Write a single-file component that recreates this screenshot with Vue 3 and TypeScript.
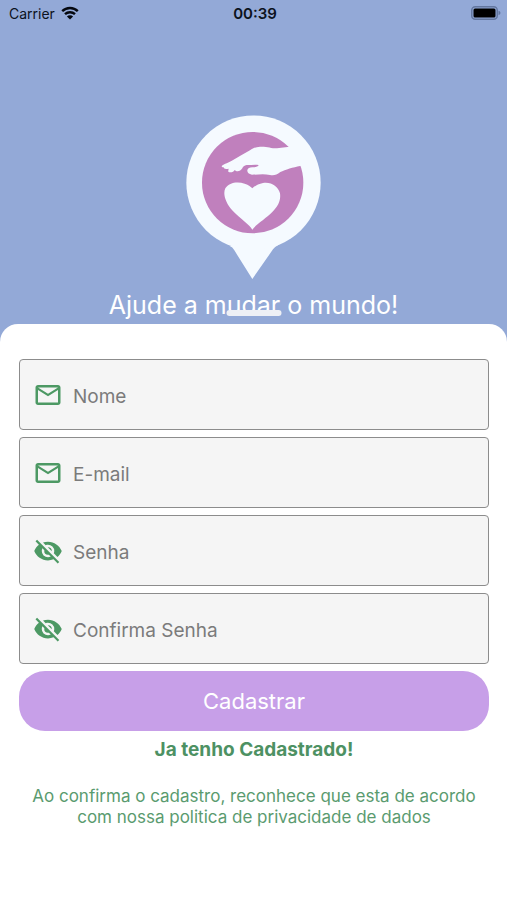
<script setup lang="ts">
import { reactive } from 'vue'

type FieldKey = 'nome' | 'email' | 'senha' | 'confirma'

interface Field {
  key: FieldKey
  label: string
  type: string
  icon: 'mail' | 'eye'
}

const fields: Field[] = [
  { key: 'nome', label: 'Nome', type: 'text', icon: 'mail' },
  { key: 'email', label: 'E-mail', type: 'email', icon: 'mail' },
  { key: 'senha', label: 'Senha', type: 'password', icon: 'eye' },
  { key: 'confirma', label: 'Confirma Senha', type: 'password', icon: 'eye' },
]

const iconPaths: Record<Field['icon'], string> = {
  mail: 'M22 6c0-1.1-.9-2-2-2H4c-1.1 0-2 .9-2 2v12c0 1.100.9 2 2 2h16c1.100 0 2-.9 2-2V6zm-2 0l-8 5-8-5h16zm0 12H4V8l8 5 8-5v10z',
  eye: 'M11.830 9L15 12.160V12a3 3 0 0 0-3-3h-.17m-4.300.8l1.550 1.550c-.05.210-.08.420-.08.650a3 3 0 0 0 3 3c.220 0 .440-.03.650-.08l1.550 1.550c-.67.330-1.410.530-2.200.530a5 5 0 0 1-5-5c0-.79.200-1.530.530-2.200M2 4.270l2.280 2.280.450.450C3.080 8.300 1.780 10 1 12c1.730 4.390 6 7.500 11 7.500 1.550 0 3.030-.3 4.380-.84l.430.420L19.730 22 21 20.730 3.270 3M12 7a5 5 0 0 1 5 5c0 .640-.13 1.260-.36 1.820l2.930 2.930c1.500-1.250 2.700-2.890 3.430-4.750-1.730-4.390-6-7.500-11-7.500-1.400 0-2.740.250-4 .7l2.170 2.150C10.740 7.130 11.350 7 12 7z',
}

const form = reactive<Record<FieldKey, string>>({
  nome: '',
  email: '',
  senha: '',
  confirma: '',
})
</script>

<template>
  <div class="screen">
    <header class="hero">
      <div class="status">
        <span class="carrier">
          Carrier
          <svg class="wifi" viewBox="0 0 18 14" aria-hidden="true">
            <path d="M1.200 5.200a11.200 11.200 0 0 1 15.600 0M4 8.200a7.200 7.200 0 0 1 10 0" />
            <path class="dot" d="M9 13.600L5.900 10.500a4.400 4.400 0 0 1 6.200 0z" />
          </svg>
        </span>
        <strong class="clock">00:39</strong>
        <svg class="battery" viewBox="0 0 30 14" aria-hidden="true">
          <rect class="shell" x="0.750" y="0.750" width="25.500" height="12.500" rx="3.500" />
          <rect x="2.500" y="2.500" width="22" height="9" rx="1.500" />
          <path class="tip" d="M27.500 4.800q2 .6 2 2.200t-2 2.200z" />
        </svg>
      </div>
      <svg class="logo" viewBox="48 32 405 489" aria-hidden="true">
        <path class="pale" d="M178 421Q188 425 193 435L247 521L309 432Q314 424 325 419z" />
        <circle class="pale" cx="250.500" cy="232" r="201.500" />
        <circle class="pink" cx="248" cy="232" r="152" />
        <path
          class="pale"
          d="M247 373C239 358 212 340 188 316C166 293 158 265 166 249C177 231 203 228 224 235C236 239 243 244 247 249C254 242 265 236 279 233C304 229 324 243 330 264C333 286 324 303 309 318C287 341 258 357 247 373z"
        />
        <path
          class="pale"
          d="M155 182C162 176 178 172 188 165C205 155 222 145 240 135C249 128 258 125 270 124C292 123 302 129 321 129L372 123L412 178L390 182C370 186 346 193 331 200C320 208 312 212 300 209C282 205 263 208 246 208C236 207 231 201 232 194C234 189 238 187 247 186C257 186 264 184 266 179C256 177 243 179 230 179C223 181 218 184 217 189C212 196 206 199 198 197L194 194C191 201 180 203 175 199C174 195 176 192 176 190C167 192 160 191 162 186C158 187 155 185 155 182z"
        />
      </svg>
      <h1 class="slogan">Ajude a mudar o mundo!</h1>
    </header>

    <main class="sheet">
      <span class="handle"></span>
      <form class="form" @submit.prevent>
        <label v-for="field in fields" :key="field.key" class="field" :for="field.key">
          <svg class="icon" viewBox="0 0 24 24" aria-hidden="true">
            <path :d="iconPaths[field.icon]" />
          </svg>
          <input
            :id="field.key"
            v-model="form[field.key]"
            class="input"
            :type="field.type"
            :placeholder="field.label"
            :aria-label="field.label"
          />
        </label>
        <button class="submit" type="submit">Cadastrar</button>
      </form>
      <a class="login" href="#">Ja tenho Cadastrado!</a>
      <p class="terms">
        Ao confirma o cadastro, reconhece que esta de acordo com nossa politica de privacidade de dados
      </p>
    </main>
  </div>
</template>

<style>
body {
  margin: 0;
  background: #fff;
}
</style>

<style scoped>
.screen {
  display: flex;
  flex-direction: column;
  min-height: 100vh;
  background: #93a9d7;
  font-family: Inter, Roboto, sans-serif;
}

.hero {
  display: flex;
  flex-direction: column;
  align-items: center;
}

.status {
  display: grid;
  grid-template-columns: 1fr auto 1fr;
  align-items: center;
  align-self: stretch;
  height: 26px;
  padding: 0 6px 0 9px;
  color: #0c1220;
  font-size: 14px;
}

.carrier {
  display: flex;
  align-items: center;
  gap: 6px;
}

.wifi {
  width: 18px;
  height: 14px;
  fill: none;
  stroke: #05080f;
  stroke-width: 2.400;
}

.wifi .dot {
  fill: #05080f;
  stroke: none;
}

.clock {
  font-size: 15px;
  font-weight: 600;
}

.battery {
  width: 30px;
  height: 14px;
  justify-self: end;
  fill: #000;
}

.battery .shell {
  fill: none;
  stroke: #6377a0;
  stroke-width: 1.500;
}

.battery .tip {
  fill: #6377a0;
}

.logo {
  width: 135px;
  height: 163px;
  margin-top: 90px;
  overflow: visible;
}

.pale {
  fill: #f5faff;
}

.pink {
  fill: #c080bd;
}

.slogan {
  margin: 9px 0 2px;
  color: #fff;
  font-size: 25px;
  font-weight: 400;
  line-height: 34px;
}

.sheet {
  position: relative;
  display: flex;
  flex: 1;
  flex-direction: column;
  padding: 35px 18px 24px 19px;
  border-radius: 18px 18px 0 0;
  background: #fff;
  text-align: center;
}

.handle {
  position: absolute;
  top: -14px;
  left: 50%;
  width: 55px;
  height: 6px;
  border-radius: 3px;
  background: #eef0f5;
  transform: translateX(-50%);
}

.form {
  display: flex;
  flex-direction: column;
  gap: 7px;
}

.field {
  display: flex;
  align-items: center;
  gap: 10px;
  box-sizing: border-box;
  height: 71px;
  padding: 0 13px;
  border: 1px solid #8c8c8c;
  border-radius: 4px;
  background: #f5f5f5;
}

.icon {
  flex: none;
  width: 30px;
  height: 30px;
  fill: #4d9964;
}

.input {
  flex: 1;
  min-width: 0;
  padding: 4px 0 0;
  border: 0;
  outline: 0;
  background: transparent;
  color: #333;
  font: inherit;
  font-size: 19px;
}

.input::placeholder {
  color: #7b7b7b;
  opacity: 1;
}

.submit {
  height: 60px;
  border: 0;
  border-radius: 26px;
  background: #c79fe8;
  color: #fff;
  font: inherit;
  font-size: 22px;
}

.login {
  align-self: center;
  margin-top: 7px;
  color: #4d9163;
  font-size: 19px;
  font-weight: 700;
  line-height: 24px;
  text-decoration: none;
}

.terms {
  margin: 24px 8px 0;
  color: #5a9b6f;
  font-size: 17px;
  line-height: 21px;
}
</style>
